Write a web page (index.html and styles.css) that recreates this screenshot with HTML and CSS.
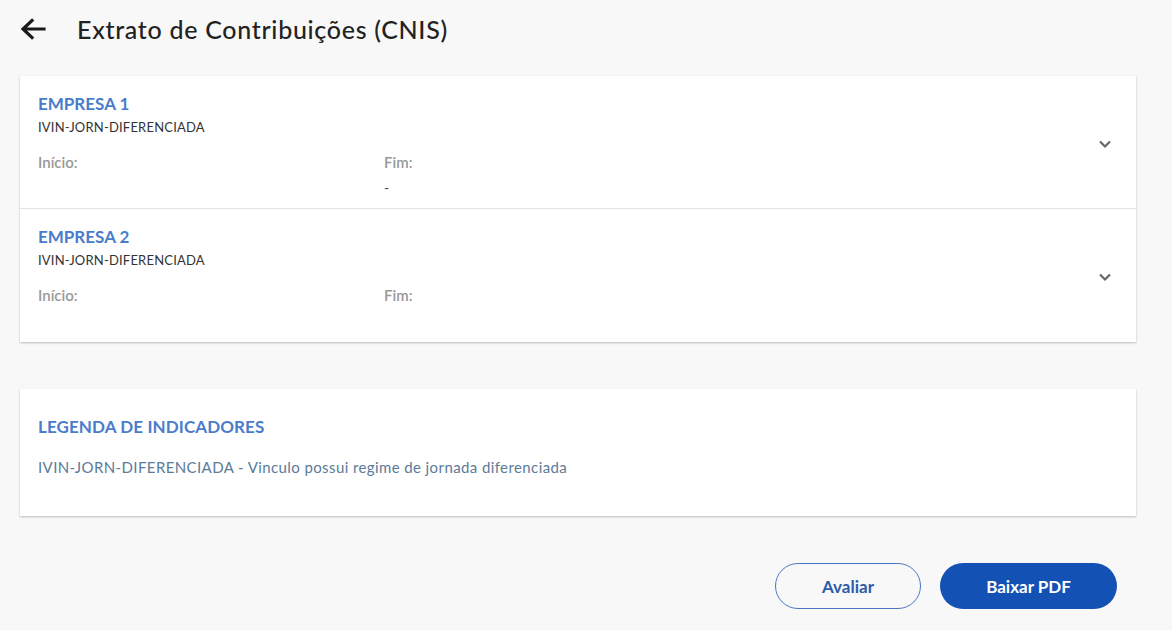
FILE: index.html
```html
<html lang="pt-BR">
<head>
    <meta charset="UTF-8">
    <meta name="viewport" content="width=device-width, initial-scale=1.0">
    <title>Extrato de Contribuições (CNIS)</title>
    <link rel="stylesheet" href="styles.css">
</head>
<body>

    <header class="top">
        <button class="back" type="button" aria-label="Voltar">
            <svg width="26" height="22" viewBox="0 0 26 22">
                <path d="M24 11H4M12 2.5L3 11l9 8.5" fill="none" stroke="#1a1a1a" stroke-width="3.2" stroke-linecap="square"/>
            </svg>
        </button>
        <h1>Extrato de Contribuições (CNIS)</h1>
    </header>

    <section class="card list">
        <div class="item">
            <div class="info">
                <h2>EMPRESA 1</h2>
                <div class="code">IVIN-JORN-DIFERENCIADA</div>
                <div class="dates">
                    <div class="date">
                        <span class="label">Início:</span>
                        <span class="value"></span>
                    </div>
                    <div class="date">
                        <span class="label">Fim:</span>
                        <span class="value">-</span>
                    </div>
                </div>
            </div>
            <svg class="chevron" width="14" height="10" viewBox="0 0 14 10">
                <path d="M2 2.5l5 5 5-5" fill="none" stroke="#666" stroke-width="2.2"/>
            </svg>
        </div>
        <div class="item">
            <div class="info">
                <h2>EMPRESA 2</h2>
                <div class="code">IVIN-JORN-DIFERENCIADA</div>
                <div class="dates">
                    <div class="date">
                        <span class="label">Início:</span>
                        <span class="value"></span>
                    </div>
                    <div class="date">
                        <span class="label">Fim:</span>
                        <span class="value"></span>
                    </div>
                </div>
            </div>
            <svg class="chevron" width="14" height="10" viewBox="0 0 14 10">
                <path d="M2 2.5l5 5 5-5" fill="none" stroke="#666" stroke-width="2.2"/>
            </svg>
        </div>
    </section>

    <section class="card legend">
        <h2>LEGENDA DE INDICADORES</h2>
        <p>IVIN-JORN-DIFERENCIADA - Vinculo possui regime de jornada diferenciada</p>
    </section>

    <div class="actions">
        <button class="btn outline" type="button">Avaliar</button>
        <button class="btn primary" type="button">Baixar PDF</button>
    </div>

</body>
</html>
```

FILE: styles.css
```css
body {
    font-family: 'Lato', 'Open Sans', sans-serif;
    margin: 0;
    padding: 0 36px 0 20px;
    background: #f8f8f8;
    color: #333;
}

.top {
    display: flex;
    align-items: center;
    height: 58px;
}

.back {
    background: none;
    border: none;
    padding: 0;
    width: 57px;
    display: flex;
    cursor: pointer;
}

h1 {
    margin: 0;
    font-size: 25px;
    font-weight: 500;
    color: #222;
    letter-spacing: 0.7px;
}

.card {
    background: white;
    box-shadow: 0 1px 2px rgba(0, 0, 0, 0.25);
}

.list {
    margin-top: 18px;
}

.item {
    display: flex;
    align-items: center;
    height: 133px;
    padding: 0 24px 0 18px;
    border-bottom: 1px solid #e4e4e4;
    box-sizing: border-box;
}

.item:last-child {
    border-bottom: none;
}

.chevron {
    margin-top: 3px;
}

.info {
    flex: 1;
    align-self: flex-start;
    padding-top: 17px;
}

h2 {
    margin: 0;
    font-size: 17px;
    font-weight: 700;
    color: #4a7ccb;
}

.code {
    font-size: 13px;
    letter-spacing: 0.2px;
    margin-top: 5px;
    color: #333;
}

.dates {
    display: flex;
    margin-top: 18px;
}

.date {
    width: 346px;
    display: flex;
    flex-direction: column;
    gap: 8px;
}

.label {
    font-size: 15px;
    font-weight: 600;
    color: #999;
}

.value {
    font-size: 14px;
    color: #444;
}

.legend {
    margin-top: 47px;
    height: 127px;
    padding: 27px 18px 0;
    box-sizing: border-box;
}

.legend h2 {
    letter-spacing: 0.1px;
}

.legend p {
    margin: 21px 0 0;
    font-size: 15px;
    letter-spacing: 0.4px;
    color: #5b7b98;
}

.actions {
    display: flex;
    justify-content: flex-end;
    gap: 19px;
    margin-top: 47px;
    padding-right: 19px;
}

.btn {
    height: 46px;
    border-radius: 23px;
    font-family: inherit;
    font-size: 17px;
    font-weight: 700;
    cursor: pointer;
}

.outline {
    width: 146px;
    background: transparent;
    border: 1px solid #4a78c0;
    color: #2c5ba8;
}

.primary {
    width: 177px;
    background: #1351b4;
    border: none;
    color: white;
}
```
